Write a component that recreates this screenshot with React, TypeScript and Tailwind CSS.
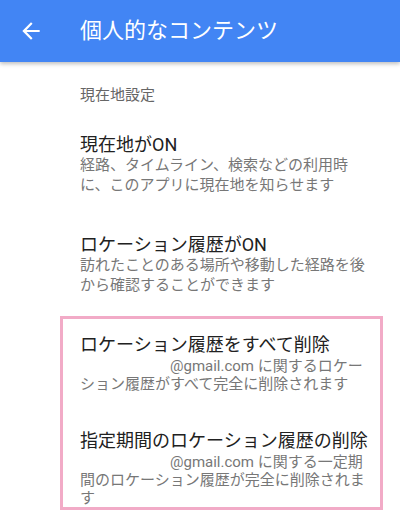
import React from 'react';

const font = { fontFamily: "Roboto, 'Noto Sans CJK JP', sans-serif" };

interface SettingItemProps {
  title: string;
  children: React.ReactNode;
  className?: string;
}

const SettingItem: React.FC<SettingItemProps> = ({ title, children, className }) => {
  return (
    <div className={className}>
      <div className="text-[18px] leading-[21px] text-[#212121]">{title}</div>
      <div className="text-[15px] leading-[20px] text-[#777777]">{children}</div>
    </div>
  );
};

const App: React.FC = () => {
  return (
    <div className="w-[400px] h-[519px] bg-white overflow-hidden" style={font}>
      {/* App bar */}
      <header className="relative z-10 h-[62px] bg-[#4285f4] flex items-center shadow-[0_2px_4px_rgba(0,0,0,0.25)]">
        <div className="w-[80px] flex items-center pl-[18px]">
          <svg width="26" height="26" viewBox="0 0 24 24" fill="white">
            <path d="M20 11H7.83l5.59-5.59L12 4l-8 8 8 8 1.41-1.41L7.83 13H20v-2z" />
          </svg>
        </div>
        <h1 className="text-[22px] leading-[28px] text-white pb-[1px]">個人的なコンテンツ</h1>
      </header>

      {/* Section label */}
      <div className="pl-[80px] pt-[23px] text-[15px] leading-[20px] text-[#666666]">現在地設定</div>

      <div className="pl-[80px] pt-[29px] w-[372px]">
        <SettingItem title="現在地がON">
          経路、タイムライン、検索などの利用時に、このアプリに現在地を知らせます
        </SettingItem>
        <SettingItem title="ロケーション履歴がON" className="mt-[39px]">
          訪れたことのある場所や移動した経路を後から確認することができます
        </SettingItem>
      </div>

      {/* Highlighted delete options */}
      <div className="ml-[60px] mt-[21px] w-[323px] border-[3px] border-[#f2abc7] pl-[17px] pr-[8px] pt-[15px]">
        <div>
          <div className="text-[18px] leading-[21px] text-[#212121]">ロケーション履歴をすべて削除</div>
          <div className="mt-[2px] text-[15px] leading-[18px] text-[#777777]">
            <span className="inline-block w-[90px]" />
            @gmail.com に関するロケー
            <br />
            ション履歴がすべて完全に削除されます
          </div>
        </div>
        <div className="mt-[37px]">
          <div className="text-[18px] leading-[21px] text-[#212121]">指定期間のロケーション履歴の削除</div>
          <div className="mt-[2px] text-[15px] leading-[18px] text-[#777777]">
            <span className="inline-block w-[90px]" />
            @gmail.com に関する一定期
            <br />
            間のロケーション履歴が完全に削除されま
            <br />す
          </div>
        </div>
      </div>
    </div>
  );
};

export default App;
